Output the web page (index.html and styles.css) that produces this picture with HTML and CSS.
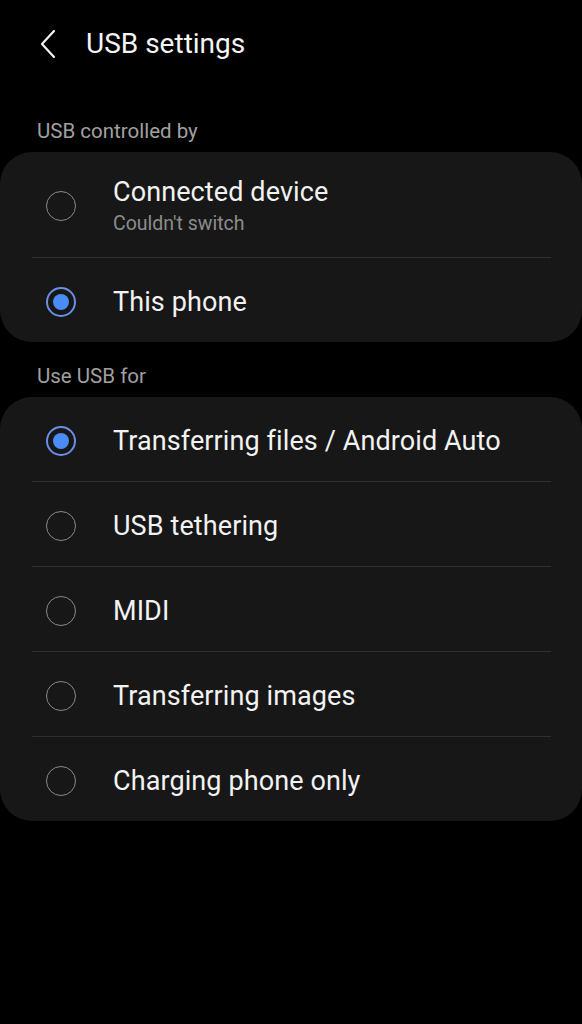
FILE: index.html
```html
<!DOCTYPE html>
<html>
<head>
<meta charset="utf-8">
<link rel="stylesheet" href="styles.css">
</head>
<body>
<div class="screen">
  <header class="topbar">
    <svg class="back" width="16" height="30" viewBox="0 0 16 30"><path d="M14 2 L2 15 L14 28" fill="none" stroke="#f2f2f2" stroke-width="2.2" stroke-linecap="round" stroke-linejoin="round"/></svg>
    <h1 class="title">USB settings</h1>
  </header>

  <div class="section-label first">USB controlled by</div>
  <div class="card">
    <div class="row tall">
      <span class="radio"></span>
      <div class="texts">
        <div class="main">Connected device</div>
        <div class="sub">Couldn't switch</div>
      </div>
    </div>
    <div class="divider"></div>
    <div class="row">
      <span class="radio on"></span>
      <div class="texts"><div class="main">This phone</div></div>
    </div>
  </div>

  <div class="section-label">Use USB for</div>
  <div class="card">
    <div class="row">
      <span class="radio on"></span>
      <div class="texts"><div class="main">Transferring files / Android Auto</div></div>
    </div>
    <div class="divider"></div>
    <div class="row">
      <span class="radio"></span>
      <div class="texts"><div class="main">USB tethering</div></div>
    </div>
    <div class="divider"></div>
    <div class="row">
      <span class="radio"></span>
      <div class="texts"><div class="main">MIDI</div></div>
    </div>
    <div class="divider"></div>
    <div class="row">
      <span class="radio"></span>
      <div class="texts"><div class="main">Transferring images</div></div>
    </div>
    <div class="divider"></div>
    <div class="row">
      <span class="radio"></span>
      <div class="texts"><div class="main">Charging phone only</div></div>
    </div>
  </div>
</div>
</body>
</html>
```

FILE: styles.css
```css
html, body {
  margin: 0;
  padding: 0;
  background: #000;
}
body {
  font-family: Roboto, "Liberation Sans", sans-serif;
  color: #f2f2f2;
  width: 582px;
  height: 1024px;
  overflow: hidden;
}
.screen {
  display: flex;
  flex-direction: column;
}
.topbar {
  height: 88px;
  display: flex;
  align-items: center;
  padding-left: 40px;
  box-sizing: border-box;
}
.back {
  display: block;
  margin-right: 30px;
}
.title {
  margin: 0;
  font-size: 28px;
  font-weight: 400;
  color: #f4f4f4;
  line-height: 32px;
}
.section-label {
  padding: 22px 37px 8px;
  font-size: 20.5px;
  line-height: 25px;
  color: #a0a0a0;
}
.section-label.first {
  padding-top: 31px;
}
.card {
  background: #171717;
  border-radius: 32px;
  display: flex;
  flex-direction: column;
}
.row {
  height: 84px;
  box-sizing: border-box;
  padding-top: 4px;
  display: flex;
  align-items: center;
  padding-left: 46px;
}
.row.tall {
  height: 105px;
  padding-top: 2px;
}
.radio {
  width: 30px;
  height: 30px;
  box-sizing: border-box;
  border: 1.6px solid #8a8a8a;
  border-radius: 50%;
  margin-right: 37px;
  flex: none;
  display: flex;
  align-items: center;
  justify-content: center;
}
.radio.on {
  border: 2px solid #6b8fe6;
}
.radio.on::after {
  content: "";
  width: 16px;
  height: 16px;
  border-radius: 50%;
  background: #4b8bf5;
}
.texts {
  display: flex;
  flex-direction: column;
}
.main {
  font-size: 27px;
  line-height: 32px;
  color: #f2f2f2;
  letter-spacing: 0.1px;
}
.sub {
  font-size: 19.5px;
  line-height: 24px;
  color: #8c8c8c;
  margin-top: 4px;
}
.divider {
  height: 1px;
  background: #2f2f2f;
  margin: 0 31px 0 32px;
}
```
